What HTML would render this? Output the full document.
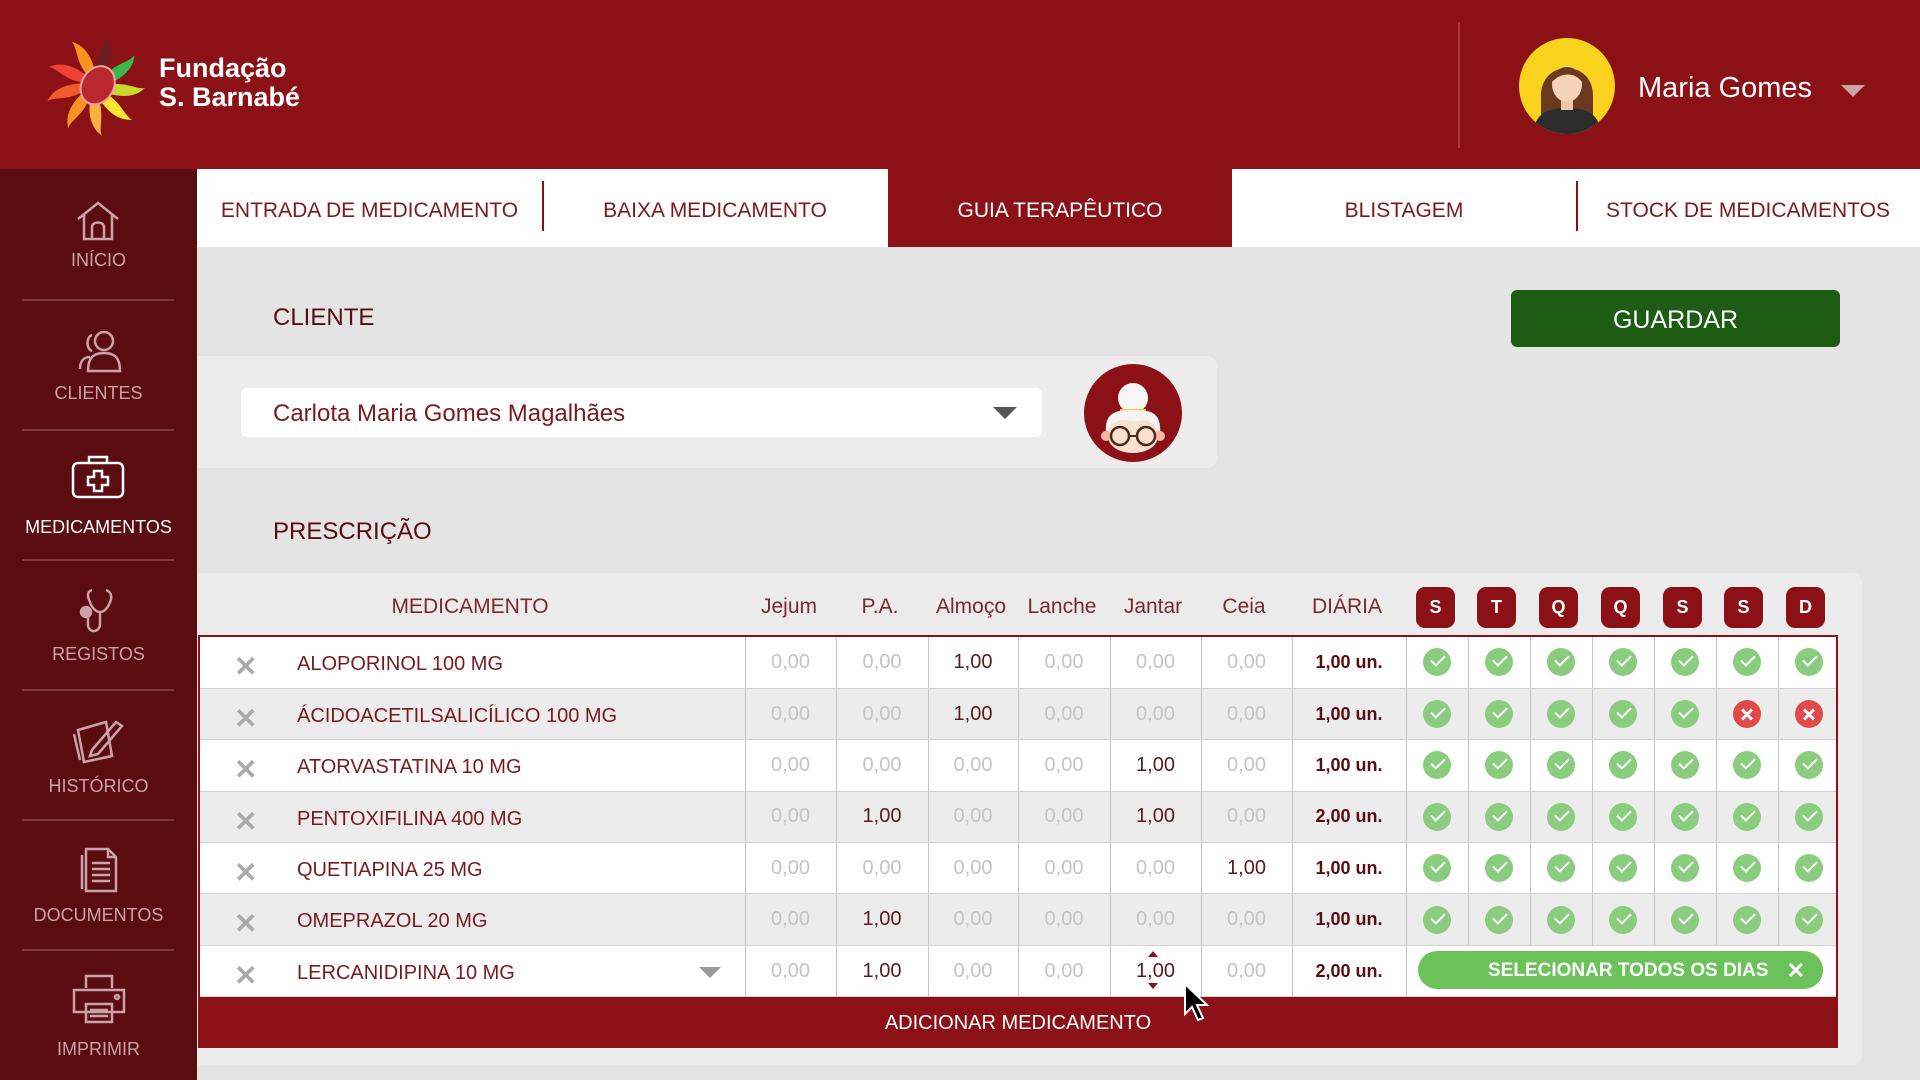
<!DOCTYPE html>
<html><head><meta charset="utf-8">
<style>
*{margin:0;padding:0;box-sizing:border-box}
body{width:1920px;height:1080px;overflow:hidden;background:#e4e4e4;font-family:"Liberation Sans",sans-serif;position:relative}
.abs{position:absolute}
#hdr{left:0;top:0;width:1920px;height:169px;background:#8c1117}
#side{left:0;top:169px;width:197px;height:911px;background:#5a0c11}
.si{position:absolute;left:0;width:197px;text-align:center;color:#c9a3a5;font-size:18px}
.sep{position:absolute;left:22px;width:152px;height:2px;background:#7e3a3e}
#tabs{left:197px;top:169px;width:1723px;height:78px;background:#fff}
.tab{position:absolute;top:0;height:78px;line-height:84px;text-align:center;color:#7a1a1e;font-size:21px}
.tsep{position:absolute;top:12px;width:2px;height:50px;background:#8c1117}
table{border-collapse:collapse;table-layout:fixed}
td{height:51.4px;border-right:1px solid #c6c6c6;border-bottom:1px solid #d2d2d2;text-align:center;font-size:20px;color:#c4c4c4;padding:0}
tr:nth-child(even) td{background:#ececec}
tr:nth-child(odd) td{background:#fff}
td.n{text-align:left;color:#7a1a1e;font-size:20px;border-right:1px solid #c6c6c6;position:relative}
td.v{color:#5a1a1a}
td.d{color:#5a0c11;font-weight:bold;font-size:18px}
td:last-child{border-right:none}
.ok,.no{display:inline-block;width:28px;height:28px;border-radius:50%;vertical-align:middle;position:relative}
.ok{background:#8bcd7e}.no{background:#e24a4a}
.ok:after{content:"";position:absolute;left:8px;top:7px;width:12px;height:6px;border-left:2.5px solid #fff;border-bottom:2.5px solid #fff;transform:rotate(-45deg)}
.no:before,.no:after{content:"";position:absolute;left:7px;top:12.5px;width:14px;height:3px;background:#fff;transform:rotate(45deg)}
.no:after{transform:rotate(-45deg)}
.x{position:absolute;left:34px;top:13px;font-size:28px;color:#aaa;font-weight:bold}
.nm{position:absolute;left:97px;top:16px}
.day{position:absolute;top:587px;width:39px;height:41px;background:#8c1117;border-radius:9px;color:#fff;font-weight:bold;font-size:18px;text-align:center;line-height:41px}
.ch{position:absolute;top:595px;font-size:21px;color:#7a2a2e;transform:translateX(-50%)}
</style></head><body>
<div id="hdr" class="abs">
 <svg class="abs" style="left:43px;top:34px" width="108" height="104" viewBox="0 0 108 104">
  <g transform="translate(52,52)">
   <path d="M0,-8 C-6,-30 4,-40 2,-50 C14,-38 10,-20 6,-8Z" fill="#f7941d" transform="rotate(-30)"/>
   <path d="M0,-8 C-6,-30 4,-40 2,-50 C14,-38 10,-20 6,-8Z" fill="#6b1d22" transform="rotate(10)"/>
   <path d="M0,-8 C-6,-30 4,-40 2,-50 C14,-38 10,-20 6,-8Z" fill="#3cb54a" transform="rotate(50)"/>
   <path d="M0,-8 C-6,-30 4,-40 2,-50 C14,-38 10,-20 6,-8Z" fill="#c8d82c" transform="rotate(90)"/>
   <path d="M0,-8 C-6,-30 4,-40 2,-50 C14,-38 10,-20 6,-8Z" fill="#f9e532" transform="rotate(130)"/>
   <path d="M0,-8 C-6,-30 4,-40 2,-50 C14,-38 10,-20 6,-8Z" fill="#fbb040" transform="rotate(170)"/>
   <path d="M0,-8 C-6,-30 4,-40 2,-50 C14,-38 10,-20 6,-8Z" fill="#f7941d" transform="rotate(210)"/>
   <path d="M0,-8 C-6,-30 4,-40 2,-50 C14,-38 10,-20 6,-8Z" fill="#f15a29" transform="rotate(250)"/>
   <path d="M0,-8 C-6,-30 4,-40 2,-50 C14,-38 10,-20 6,-8Z" fill="#ef4136" transform="rotate(290)"/>
   <ellipse cx="2" cy="-2" rx="16" ry="20" fill="#b8282e" stroke="#f4a0a0" stroke-width="2" transform="rotate(30)"/>
  </g>
 </svg>
 <div class="abs" style="left:159px;top:54px;color:#fff;font-weight:bold;font-size:27px;line-height:29px">Fundação<br>S. Barnabé</div>
 <div class="abs" style="left:1458px;top:22px;width:2px;height:126px;background:#a8383d"></div>
 <svg class="abs" style="left:1519px;top:38px" width="96" height="96" viewBox="0 0 96 96">
  <defs><clipPath id="c1"><circle cx="48" cy="48" r="48"/></clipPath></defs>
  <circle cx="48" cy="48" r="48" fill="#f8d21c"/>
  <g clip-path="url(#c1)">
   <path d="M22,60 C20,20 76,20 74,60 L74,80 L22,80Z" fill="#6b3a1e"/>
   <path d="M14,100 C14,74 30,70 48,70 C66,70 82,74 82,100Z" fill="#2d2d2d"/>
   <rect x="42" y="58" width="12" height="14" fill="#f1c6a8"/>
   <ellipse cx="48" cy="46" rx="15" ry="18" fill="#f6d2b6"/>
   <path d="M33,44 C34,24 62,24 63,44 C56,34 42,34 33,44Z" fill="#6b3a1e"/>
  </g>
 </svg>
 <div class="abs" style="left:1638px;top:72px;color:#fff;font-size:29px">Maria Gomes</div>
 <div class="abs" style="left:1841px;top:85px;width:0;height:0;border-left:12px solid transparent;border-right:12px solid transparent;border-top:12px solid #c9a3a5"></div>
</div>

<div id="side" class="abs">
 <svg class="abs" style="left:76px;top:32px" width="44" height="40" viewBox="0 0 44 40" fill="none" stroke="#c9a3a5" stroke-width="2.5"><path d="M2,18 L22,2 L42,18 M8,14 V38 H36 V14 M16,38 V26 C16,20 28,20 28,26 V38"/></svg>
 <div class="si" style="top:81px">INÍCIO</div>
 <div class="sep" style="top:130px"></div>
 <svg class="abs" style="left:76px;top:160px" width="48" height="44" viewBox="0 0 48 44" fill="none" stroke="#c9a3a5" stroke-width="2.5"><circle cx="28" cy="12" r="9"/><path d="M12,42 C12,28 18,24 28,24 C38,24 44,28 44,42Z"/><path d="M14,28 C8,28 4,32 4,40 M16,6 C10,8 10,20 16,22"/></svg>
 <div class="si" style="top:214px">CLIENTES</div>
 <div class="sep" style="top:260px"></div>
 <svg class="abs" style="left:71px;top:286px" width="54" height="44" viewBox="0 0 54 44" fill="none" stroke="#fff" stroke-width="2.5"><rect x="2" y="8" width="50" height="34" rx="5"/><path d="M18,8 V2 H36 V8"/><path d="M23,16 H31 V22 H37 V30 H31 V36 H23 V30 H17 V22 H23Z"/></svg>
 <div class="si" style="top:348px;color:#fff">MEDICAMENTOS</div>
 <div class="sep" style="top:390px"></div>
 <svg class="abs" style="left:78px;top:419px" width="40" height="48" viewBox="0 0 40 48" fill="none" stroke="#c9a3a5" stroke-width="2.5"><path d="M14,2 C8,4 10,10 12,14 C14,20 18,24 22,24 C26,24 30,20 32,14 C34,10 34,4 28,2 M22,24 V36 C22,44 12,46 10,38 V26"/><circle cx="8" cy="24" r="5" fill="#c9a3a5"/></svg>
 <div class="si" style="top:475px">REGISTOS</div>
 <div class="sep" style="top:520px"></div>
 <svg class="abs" style="left:72px;top:547px" width="52" height="48" viewBox="0 0 52 48" fill="none" stroke="#c9a3a5" stroke-width="2.5"><path d="M6,14 L34,6 L40,40 L12,46Z M2,18 L8,44"/><path d="M20,34 L44,6 L50,10 L26,38 L18,40Z"/></svg>
 <div class="si" style="top:607px">HISTÓRICO</div>
 <div class="sep" style="top:650px"></div>
 <svg class="abs" style="left:80px;top:678px" width="38" height="46" viewBox="0 0 38 46" fill="none" stroke="#c9a3a5" stroke-width="2.5"><path d="M6,2 H28 L36,10 V44 H6Z M28,2 V10 H36 M12,16 H30 M12,22 H30 M12,28 H30 M12,34 H30"/><path d="M2,8 V42"/></svg>
 <div class="si" style="top:736px">DOCUMENTOS</div>
 <div class="sep" style="top:780px"></div>
 <svg class="abs" style="left:72px;top:805px" width="54" height="50" viewBox="0 0 54 50" fill="none" stroke="#c9a3a5" stroke-width="2.5"><path d="M14,14 V2 H40 V14 M2,16 H52 V38 H2Z M14,30 H40 V48 H14Z M18,36 H36 M18,42 H36"/><circle cx="45" cy="23" r="2"/></svg>
 <div class="si" style="top:870px">IMPRIMIR</div>
</div>

<div id="tabs" class="abs">
 <div class="tab" style="left:0;width:345px">ENTRADA DE MEDICAMENTO</div>
 <div class="tsep" style="left:345px"></div>
 <div class="tab" style="left:345px;width:346px">BAIXA MEDICAMENTO</div>
 <div class="tab" style="left:691px;width:344px;background:#8c1117;color:#fff">GUIA TERAPÊUTICO</div>
 <div class="tab" style="left:1035px;width:344px">BLISTAGEM</div>
 <div class="tsep" style="left:1379px"></div>
 <div class="tab" style="left:1379px;width:344px">STOCK DE MEDICAMENTOS</div>
</div>

<div class="abs" style="left:273px;top:304px;font-size:24px;color:#5a0c11">CLIENTE</div>
<div class="abs" style="left:1511px;top:290px;width:329px;height:57px;background:#1f5c13;border-radius:6px;color:#fff;font-size:25px;text-align:center;line-height:60px">GUARDAR</div>

<div class="abs" style="left:197px;top:356px;width:1020px;height:112px;background:#ececec;border-radius:0 10px 10px 0"></div>
<div class="abs" style="left:241px;top:388px;width:801px;height:49px;background:#fff;border-radius:6px"></div>
<div class="abs" style="left:273px;top:400px;font-size:24px;color:#7a1a1e">Carlota Maria Gomes Magalhães</div>
<div class="abs" style="left:993px;top:407px;border-left:12px solid transparent;border-right:12px solid transparent;border-top:12px solid #555"></div>
<svg class="abs" style="left:1084px;top:364px" width="98" height="98" viewBox="0 0 98 98">
 <circle cx="49" cy="49" r="49" fill="#8c1117"/>
 <circle cx="49" cy="34" r="15" fill="#f7f7f7"/>
 <rect x="36" y="45" width="26" height="4" fill="#f5c518"/>
 <path d="M24,74 C22,48 32,50 49,50 C66,50 76,48 74,74 C70,94 28,94 24,74Z" fill="#fbe0cf"/>
 <path d="M22,70 C20,48 32,46 49,46 C66,46 78,48 76,70 C70,56 60,54 49,58 C38,54 28,56 22,70Z" fill="#f4f4f4"/>
 <circle cx="22" cy="72" r="5" fill="#f3b9a5"/><circle cx="76" cy="72" r="5" fill="#f3b9a5"/>
 <circle cx="36" cy="72" r="9" fill="none" stroke="#4a2a1a" stroke-width="2.5"/>
 <circle cx="62" cy="72" r="9" fill="none" stroke="#4a2a1a" stroke-width="2.5"/>
 <path d="M45,72 H53" stroke="#4a2a1a" stroke-width="2"/>
</svg>

<div class="abs" style="left:273px;top:518px;font-size:24px;color:#5a0c11">PRESCRIÇÃO</div>

<div class="abs" style="left:197px;top:573px;width:1665px;height:492px;background:#ebebeb;border-radius:0 10px 10px 0"></div>
<div class="ch" style="left:470px">MEDICAMENTO</div>
<div class="ch" style="left:789px">Jejum</div>
<div class="ch" style="left:880px">P.A.</div>
<div class="ch" style="left:971px">Almoço</div>
<div class="ch" style="left:1062px">Lanche</div>
<div class="ch" style="left:1153px">Jantar</div>
<div class="ch" style="left:1244px">Ceia</div>
<div class="ch" style="left:1347px">DIÁRIA</div>
<div class="day" style="left:1416px">S</div>
<div class="day" style="left:1477px">T</div>
<div class="day" style="left:1539px">Q</div>
<div class="day" style="left:1601px">Q</div>
<div class="day" style="left:1663px">S</div>
<div class="day" style="left:1724px">S</div>
<div class="day" style="left:1786px">D</div>

<div class="abs" style="left:198px;top:635px;width:1640px;height:363px;border:2px solid #8c1117;border-bottom:none;overflow:hidden">
<table style="width:1636px">
<colgroup><col style="width:545px"><col style="width:91px"><col style="width:92px"><col style="width:90px"><col style="width:92px"><col style="width:91px"><col style="width:91px"><col style="width:114px"><col style="width:62px"><col style="width:62px"><col style="width:62px"><col style="width:62px"><col style="width:62px"><col style="width:62px"><col style="width:61px"></colgroup>
<tr><td class="n"><span class="x">✕</span><span class="nm">ALOPORINOL 100 MG</span></td><td>0,00</td><td>0,00</td><td class="v">1,00</td><td>0,00</td><td>0,00</td><td>0,00</td><td class="d">1,00 un.</td><td><i class="ok"></i></td><td><i class="ok"></i></td><td><i class="ok"></i></td><td><i class="ok"></i></td><td><i class="ok"></i></td><td><i class="ok"></i></td><td><i class="ok"></i></td></tr>
<tr><td class="n"><span class="x">✕</span><span class="nm">ÁCIDOACETILSALICÍLICO 100 MG</span></td><td>0,00</td><td>0,00</td><td class="v">1,00</td><td>0,00</td><td>0,00</td><td>0,00</td><td class="d">1,00 un.</td><td><i class="ok"></i></td><td><i class="ok"></i></td><td><i class="ok"></i></td><td><i class="ok"></i></td><td><i class="ok"></i></td><td><i class="no"></i></td><td><i class="no"></i></td></tr>
<tr><td class="n"><span class="x">✕</span><span class="nm">ATORVASTATINA 10 MG</span></td><td>0,00</td><td>0,00</td><td>0,00</td><td>0,00</td><td class="v">1,00</td><td>0,00</td><td class="d">1,00 un.</td><td><i class="ok"></i></td><td><i class="ok"></i></td><td><i class="ok"></i></td><td><i class="ok"></i></td><td><i class="ok"></i></td><td><i class="ok"></i></td><td><i class="ok"></i></td></tr>
<tr><td class="n"><span class="x">✕</span><span class="nm">PENTOXIFILINA 400 MG</span></td><td>0,00</td><td class="v">1,00</td><td>0,00</td><td>0,00</td><td class="v">1,00</td><td>0,00</td><td class="d">2,00 un.</td><td><i class="ok"></i></td><td><i class="ok"></i></td><td><i class="ok"></i></td><td><i class="ok"></i></td><td><i class="ok"></i></td><td><i class="ok"></i></td><td><i class="ok"></i></td></tr>
<tr><td class="n"><span class="x">✕</span><span class="nm">QUETIAPINA 25 MG</span></td><td>0,00</td><td>0,00</td><td>0,00</td><td>0,00</td><td>0,00</td><td class="v">1,00</td><td class="d">1,00 un.</td><td><i class="ok"></i></td><td><i class="ok"></i></td><td><i class="ok"></i></td><td><i class="ok"></i></td><td><i class="ok"></i></td><td><i class="ok"></i></td><td><i class="ok"></i></td></tr>
<tr><td class="n"><span class="x">✕</span><span class="nm">OMEPRAZOL 20 MG</span></td><td>0,00</td><td class="v">1,00</td><td>0,00</td><td>0,00</td><td>0,00</td><td>0,00</td><td class="d">1,00 un.</td><td><i class="ok"></i></td><td><i class="ok"></i></td><td><i class="ok"></i></td><td><i class="ok"></i></td><td><i class="ok"></i></td><td><i class="ok"></i></td><td><i class="ok"></i></td></tr>
<tr><td class="n"><span class="x">✕</span><span class="nm">LERCANIDIPINA 10 MG</span><span style="position:absolute;left:499px;top:21px;border-left:11px solid transparent;border-right:11px solid transparent;border-top:11px solid #999"></span></td><td>0,00</td><td class="v">1,00</td><td>0,00</td><td>0,00</td><td class="v">1,00</td><td>0,00</td><td class="d">2,00 un.</td><td colspan="7" style="position:relative"></td></tr>
</table>
</div>
<div class="abs" style="left:1148px;top:951px;border-left:5px solid transparent;border-right:5px solid transparent;border-bottom:6px solid #8c1117"></div>
<div class="abs" style="left:1148px;top:983px;border-left:5px solid transparent;border-right:5px solid transparent;border-top:6px solid #8c1117"></div>
<div class="abs" style="left:1418px;top:951px;width:405px;height:38px;background:#6cc25a;border-radius:19px;color:#fff;font-size:19px;font-weight:bold;line-height:40px;padding-left:70px">SELECIONAR TODOS OS DIAS<span style="position:absolute;right:18px;font-size:22px">✕</span></div>
<div class="abs" style="left:198px;top:997px;width:1640px;height:51px;background:#8c1117;color:#fff;font-size:20px;text-align:center;line-height:53px">ADICIONAR MEDICAMENTO</div>
<svg class="abs" style="left:1183px;top:982px" width="30" height="42" viewBox="0 0 30 42"><path d="M2,2 L2,32 L9,25 L15,38 L20,36 L14,23 L24,23Z" fill="#000" stroke="#fff" stroke-width="2"/></svg>
</body></html>
